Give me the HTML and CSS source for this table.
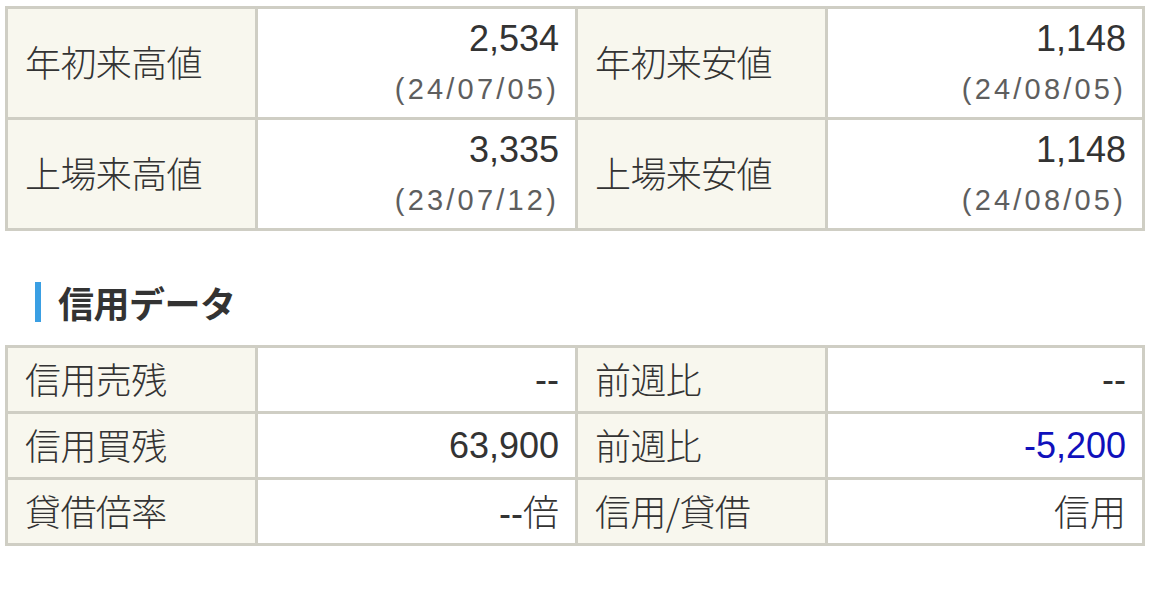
FILE: index.html
```html
<!DOCTYPE html>
<html lang="ja">
<head>
<meta charset="utf-8">
<link rel="stylesheet" href="styles.css">
</head>
<body>
<table class="tbl tbl-price">
  <colgroup><col class="c-label"><col class="c-value"><col class="c-label"><col class="c-value2"></colgroup>
  <tr>
    <th>年初来高値</th>
    <td><div class="num">2,534</div><div class="date">(24/07/05)</div></td>
    <th>年初来安値</th>
    <td><div class="num">1,148</div><div class="date">(24/08/05)</div></td>
  </tr>
  <tr>
    <th>上場来高値</th>
    <td><div class="num">3,335</div><div class="date">(23/07/12)</div></td>
    <th>上場来安値</th>
    <td><div class="num">1,148</div><div class="date">(24/08/05)</div></td>
  </tr>
</table>

<h2 class="section-title">信用データ</h2>

<table class="tbl tbl-credit">
  <colgroup><col class="c-label"><col class="c-value"><col class="c-label"><col class="c-value2"></colgroup>
  <tr>
    <th>信用売残</th>
    <td><span class="num">--</span></td>
    <th>前週比</th>
    <td><span class="num">--</span></td>
  </tr>
  <tr>
    <th>信用買残</th>
    <td><span class="num">63,900</span></td>
    <th>前週比</th>
    <td><span class="num minus">-5,200</span></td>
  </tr>
  <tr>
    <th>貸借倍率</th>
    <td><span class="num">--</span><span class="jp">倍</span></td>
    <th>信用/貸借</th>
    <td><span class="jp">信用</span></td>
  </tr>
</table>
</body>
</html>
```

FILE: styles.css
```css
html, body {
  margin: 0;
  padding: 0;
  background: #ffffff;
}

body {
  padding: 6px 0 0 5px;
  font-family: "Liberation Sans", "Noto Sans CJK JP", sans-serif;
  color: #333333;
}

.tbl {
  border-collapse: collapse;
  table-layout: fixed;
  width: 1137px;
  border: 3px solid #cfcec4;
}

.c-label { width: 250px; }
.c-value { width: 320px; }
.c-value2 { width: 317px; }

.tbl th,
.tbl td {
  border: 3px solid #cfcec4;
  padding: 0;
}

.tbl th {
  background: #f8f7ee;
  text-align: left;
  font-weight: 300;
  font-family: "Noto Sans CJK JP", sans-serif;
  font-size: 36px;
  color: #333333;
  padding-left: 17px;
  letter-spacing: -0.6px;
}

.tbl td {
  text-align: right;
  padding-right: 16px;
}

.tbl-price tr { height: 111px; }
.tbl-credit tr { height: 66px; }

.tbl-price th {
  padding-bottom: 5px;
}

.tbl-price .num {
  font-size: 36px;
  line-height: 40px;
  margin-top: -2px;
}

.tbl-price .date {
  font-size: 29px;
  line-height: 34px;
  color: #5e5e5e;
  letter-spacing: 3.2px;
  margin-top: 13px;
  margin-right: 0;
}

.tbl-credit th {
  line-height: 40px;
  padding-bottom: 4px;
}

.tbl-credit td {
  font-size: 36px;
  line-height: 40px;
  padding-bottom: 0;
}

.tbl-credit .jp {
  font-family: "Noto Sans CJK JP", sans-serif;
  font-weight: 300;
  font-size: 36px;
}

.minus {
  color: #1010bb;
}

.section-title {
  margin: 51px 0 23px 30px;
  padding-left: 17px;
  border-left: 6px solid #3a9fe3;
  font-family: "Noto Sans CJK JP", sans-serif;
  font-weight: bold;
  font-size: 36px;
  line-height: 40px;
  height: 40px;
  color: #333333;
  letter-spacing: -0.5px;
}
```
